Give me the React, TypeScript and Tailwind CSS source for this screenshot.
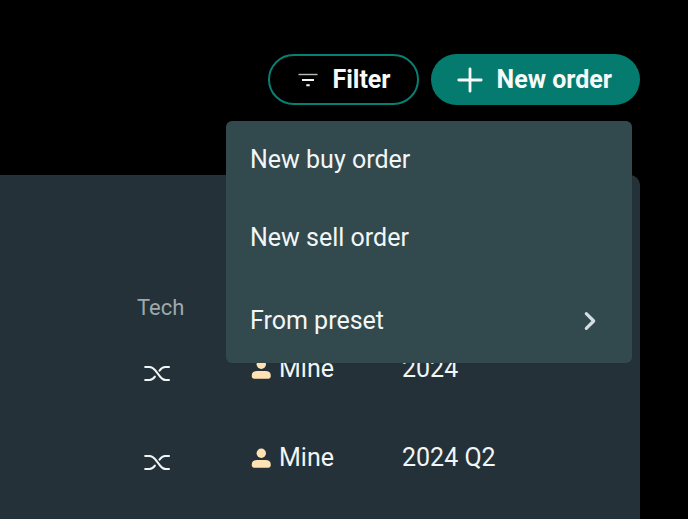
type Order = { id: number; owner: string; period: string };

const orders: Order[] = [
  { id: 1, owner: "Mine", period: "2024" },
  { id: 2, owner: "Mine", period: "2024 Q2" },
];

function FilterIcon() {
  return (
    <svg viewBox="0 0 20 14" className="h-[14px] w-5" fill="none" aria-hidden>
      <path d="M.5 1.500h19" stroke="#b4bcbc" strokeWidth="1.400" />
      <path d="M4 7h12M8.300 12.200h3.400" stroke="#f1f5f5" strokeWidth="1.900" />
    </svg>
  );
}

function PlusIcon() {
  return (
    <svg
      viewBox="0 0 26 26"
      className="h-[26px] w-[26px]"
      fill="none"
      stroke="currentColor"
      strokeWidth="2.800"
      strokeLinecap="round"
      aria-hidden
    >
      <path d="M13 1.800v22.400M1.800 13h22.400" />
    </svg>
  );
}

function ShuffleIcon() {
  return (
    <svg
      viewBox="0 0 28 18"
      className="h-[18px] w-7"
      fill="none"
      stroke="#f1f5f5"
      strokeWidth="2.100"
      strokeLinecap="round"
      role="img"
      aria-label="Mixed"
    >
      <path d="M2.200 2h4.300c2.500 0 4.100 1.300 5.800 3.400l5 6.400c1.500 1.900 3 3.200 5.400 3.200H26" />
      <path d="M26 2h-3.800c-2.400 0-4 1.300-5.700 3.600M2.200 15h4.300c2.300 0 3.800-1.100 5.400-3.300" />
    </svg>
  );
}

function PersonIcon() {
  return (
    <svg viewBox="0 0 20 20" className="h-5 w-5" fill="#fee2b3" aria-hidden>
      <circle cx="10.300" cy="5.200" r="4.700" />
      <path d="M6 12h8.500c3 0 5.200 1.500 5.200 4v1.200c0 1.500-.9 2.500-2.400 2.500H3.200c-1.500 0-2.400-1-2.400-2.500V16c0-2.500 2.200-4 5.200-4z" />
    </svg>
  );
}

function NewOrderMenu() {
  const item = "flex w-full items-center px-6 text-left";
  return (
    <div
      role="menu"
      aria-label="New order"
      className="absolute right-2 top-full z-10 mt-4 w-[406px] rounded-md bg-[#32494e] text-[25px] font-normal leading-8 text-[#f3f6f6]"
    >
      <button role="menuitem" className={`${item} h-[78px]`}>
        New buy order
      </button>
      <button role="menuitem" className={`${item} h-[78px]`}>
        New sell order
      </button>
      <button
        role="menuitem"
        aria-haspopup="menu"
        className={`${item} h-[86px] justify-between pt-0.5`}
      >
        From preset
        <svg
          viewBox="0 0 12 20"
          className="mr-3 h-5 w-3"
          fill="none"
          stroke="#d5dfe1"
          strokeWidth="3.200"
          strokeLinecap="round"
          strokeLinejoin="round"
          aria-hidden
        >
          <path d="M2.300 2.700L9.700 10l-7.400 7.300" />
        </svg>
      </button>
    </div>
  );
}

function OrdersTable() {
  return (
    <table className="w-full table-fixed text-left text-[25px] leading-8 text-[#f1f5f5]">
      <colgroup>
        <col className="w-[137px]" />
        <col className="w-[114px]" />
        <col className="w-[151px]" />
        <col />
      </colgroup>
      <thead>
        <tr className="h-8 text-[22px] text-[#9ba9ac]">
          <td />
          <th scope="col" className="p-0 font-normal">Tech</th>
          <td />
          <td />
        </tr>
      </thead>
      <tbody>
        {orders.map((o) => (
          <tr key={o.id} className="h-[89px]">
            <td />
            <td className="px-1.5 pt-2.5">
              <ShuffleIcon />
            </td>
            <td className="p-0">
              <span className="flex items-center gap-2">
                <PersonIcon />
                {o.owner}
              </span>
            </td>
            <td className="p-0">{o.period}</td>
          </tr>
        ))}
      </tbody>
    </table>
  );
}

export default function App() {
  return (
    <div className="flex min-h-screen flex-col bg-black pr-12 font-['Roboto',sans-serif]">
      <header className="relative mt-[54px] flex justify-end gap-3 text-[25px] font-bold leading-8 text-[#f8fafa]">
        <button className="flex h-[51px] items-center gap-3.5 rounded-full border-2 border-[#087f73] pl-7 pr-[26px]">
          <FilterIcon />
          Filter
        </button>
        <button
          aria-haspopup="menu"
          aria-expanded="true"
          className="flex h-[51px] items-center gap-3.5 rounded-full bg-[#057a6e] pl-[26px] pr-7"
        >
          <PlusIcon />
          New order
        </button>
        <NewOrderMenu />
      </header>
      <main className="mt-[70px] flex-1 rounded-tr-[10px] bg-[#243138] pt-[117px]">
        <OrdersTable />
      </main>
    </div>
  );
}
